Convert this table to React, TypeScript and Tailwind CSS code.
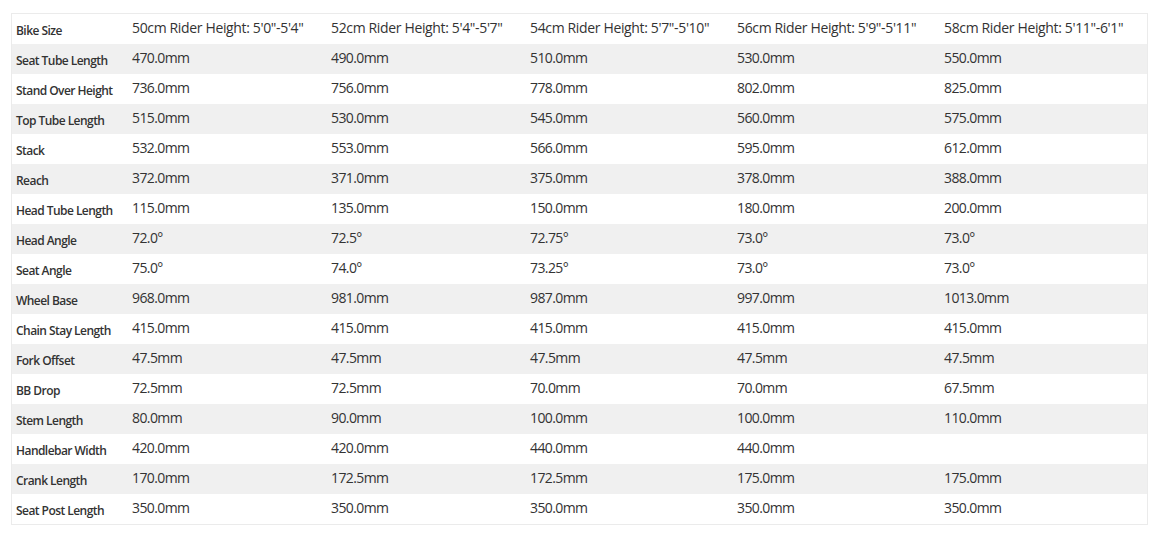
const headers = [
  "50cm Rider Height: 5'0\"-5'4\"",
  "52cm Rider Height: 5'4\"-5'7\"",
  "54cm Rider Height: 5'7\"-5'10\"",
  "56cm Rider Height: 5'9\"-5'11\"",
  "58cm Rider Height: 5'11\"-6'1\"",
];

const rows: [string, string[]][] = [
  ["Seat Tube Length", ["470.0mm", "490.0mm", "510.0mm", "530.0mm", "550.0mm"]],
  ["Stand Over Height", ["736.0mm", "756.0mm", "778.0mm", "802.0mm", "825.0mm"]],
  ["Top Tube Length", ["515.0mm", "530.0mm", "545.0mm", "560.0mm", "575.0mm"]],
  ["Stack", ["532.0mm", "553.0mm", "566.0mm", "595.0mm", "612.0mm"]],
  ["Reach", ["372.0mm", "371.0mm", "375.0mm", "378.0mm", "388.0mm"]],
  ["Head Tube Length", ["115.0mm", "135.0mm", "150.0mm", "180.0mm", "200.0mm"]],
  ["Head Angle", ["72.0°", "72.5°", "72.75°", "73.0°", "73.0°"]],
  ["Seat Angle", ["75.0°", "74.0°", "73.25°", "73.0°", "73.0°"]],
  ["Wheel Base", ["968.0mm", "981.0mm", "987.0mm", "997.0mm", "1013.0mm"]],
  ["Chain Stay Length", ["415.0mm", "415.0mm", "415.0mm", "415.0mm", "415.0mm"]],
  ["Fork Offset", ["47.5mm", "47.5mm", "47.5mm", "47.5mm", "47.5mm"]],
  ["BB Drop", ["72.5mm", "72.5mm", "70.0mm", "70.0mm", "67.5mm"]],
  ["Stem Length", ["80.0mm", "90.0mm", "100.0mm", "100.0mm", "110.0mm"]],
  ["Handlebar Width", ["420.0mm", "420.0mm", "440.0mm", "440.0mm", ""]],
  ["Crank Length", ["170.0mm", "172.5mm", "172.5mm", "175.0mm", "175.0mm"]],
  ["Seat Post Length", ["350.0mm", "350.0mm", "350.0mm", "350.0mm", "350.0mm"]],
];

const grid = "grid grid-cols-[116px_199px_199px_207px_207px_207px] h-[30px]";

function Row({
  label,
  values,
  shaded,
  header,
}: {
  label: string;
  values: string[];
  shaded: boolean;
  header?: boolean;
}) {
  return (
    <div className={`${grid} ${shaded ? "bg-[#f0f0f0]" : "bg-white"}`}>
      <div className="pl-[4px] pt-[8px] text-[12px] leading-[18px] font-semibold tracking-[-0.55px] text-[#333] whitespace-nowrap">
        {label}
      </div>
      {values.map((v, i) => (
        <div
          key={i}
          className={`pl-[4px] pt-[4px] text-[14px] leading-[20px] text-[#333] whitespace-nowrap ${
            header ? "tracking-[-0.35px]" : "tracking-[-0.6px]"
          }`}
        >
          {v}
        </div>
      ))}
    </div>
  );
}

export default function App() {
  return (
    <div
      className="w-[1163px] h-[540px] bg-white pt-[13px] pl-[11px]"
      style={{ fontFamily: '"Open Sans", "Noto Sans", sans-serif' }}
    >
      <div className="w-[1137px] border border-[#ebebeb]">
        <Row label="Bike Size" values={headers} shaded={false} header />
        {rows.map(([l, v], i) => (
          <Row key={l} label={l} values={v} shaded={i % 2 === 0} />
        ))}
      </div>
    </div>
  );
}
